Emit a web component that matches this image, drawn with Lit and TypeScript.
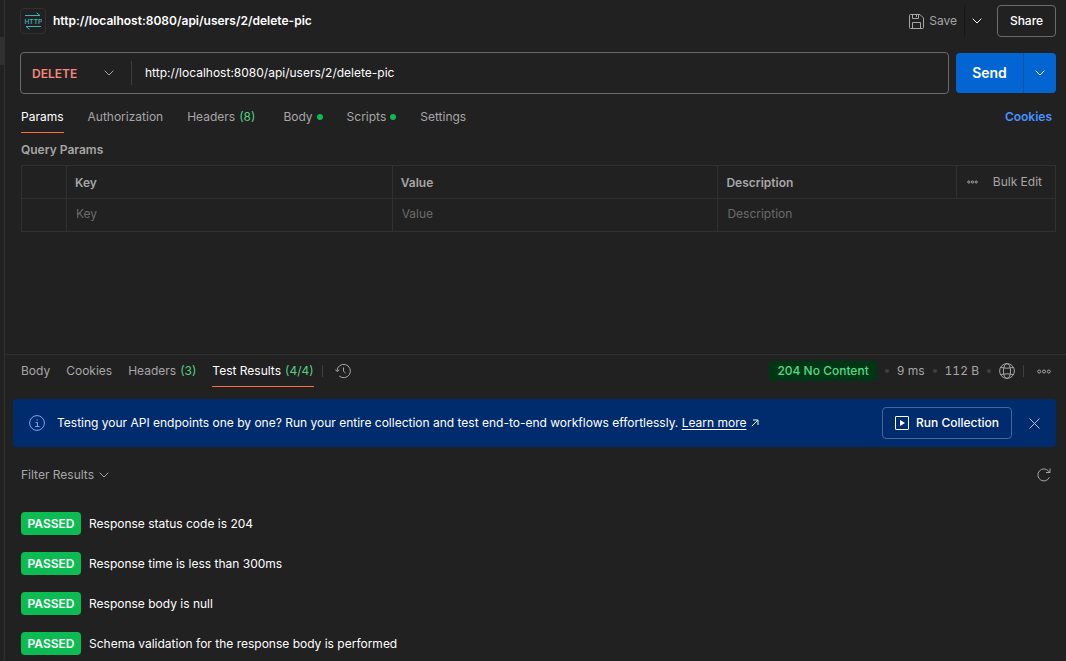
import { LitElement, html, css, svg, nothing } from "lit";
import { customElement, property, state } from "lit/decorators.js";
import { classMap } from "lit/directives/class-map.js";

const shared = css`
  * {
    box-sizing: border-box;
  }
  button,
  input,
  select {
    font: inherit;
    color: inherit;
    background: none;
    border: 0;
    margin: 0;
    padding: 0;
    outline: none;
  }
  button,
  select {
    cursor: pointer;
  }
  button {
    display: inline-flex;
    align-items: center;
    justify-content: center;
    white-space: nowrap;
  }
  svg {
    display: block;
    flex: none;
    fill: none;
    stroke: currentColor;
  }
`;

const chevron = html`<svg width="10" height="6" viewBox="0 0 10 6" aria-hidden="true">
  ${svg`<path d="M0.7 0.7 5 5 9.3 0.7" />`}
</svg>`;

interface Tab {
  label: string;
  count?: string;
  dot?: boolean;
}

@customElement("tab-bar")
export class TabBar extends LitElement {
  @property({ attribute: false }) tabs: Tab[] = [];
  @property({ type: Number }) active = 0;

  static styles = [
    shared,
    css`
      :host {
        display: block;
      }
      .tabs {
        display: flex;
        gap: var(--tab-gap, 24px);
      }
      .tab {
        height: 32px;
        gap: 4px;
        color: #a6a6a6;
        border-bottom: 1px solid transparent;
      }
      .active {
        color: #fff;
        border-bottom-color: #ff6c37;
      }
      .count {
        margin-right: var(--count-space, 0);
        color: #55cf80;
      }
      .dot {
        width: 6px;
        height: 6px;
        border-radius: 50%;
        background: #0cbb52;
      }
    `,
  ];

  render() {
    return html`<div class="tabs" role="tablist">
      ${this.tabs.map(
        (t, i) => html`<button
          role="tab"
          class=${classMap({ tab: true, active: i === this.active })}
          aria-selected=${i === this.active}
          @click=${() => (this.active = i)}
        >
          <span>${t.label}</span>
          ${t.count ? html`<span class="count">(${t.count})</span>` : nothing}
          ${t.dot ? html`<span class="dot"></span>` : nothing}
        </button>`
      )}
    </div>`;
  }
}

@customElement("request-pane")
export class RequestPane extends LitElement {
  @state() private url = "http://localhost:8080/api/users/2/delete-pic";

  static styles = [
    shared,
    css`
      :host {
        display: block;
        padding: 5px 10px 16px 15px;
      }
      .head {
        display: flex;
        align-items: center;
        height: 32px;
      }
      .http {
        display: grid;
        place-items: center;
        width: 26px;
        height: 26px;
        border: 1px solid #303030;
        border-radius: 4px;
        color: #3fb0ba;
      }
      .http text {
        fill: currentColor;
        stroke: none;
        font: 500 7px Roboto, sans-serif;
      }
      .title {
        flex: 1;
        margin: 0 0 0 7px;
        font-size: 12px;
        font-weight: 600;
        color: #fff;
      }
      .save {
        gap: 5px;
        padding-right: 7px;
        height: 32px;
        color: #a6a6a6;
        border-right: 1px solid #171717;
      }
      .more {
        width: 24px;
        height: 32px;
        color: #fff;
      }
      .share {
        width: 59px;
        height: 32px;
        margin-left: 8px;
        border: 1px solid #6b6b6b;
        border-radius: 4px;
        color: #fff;
        font-weight: 500;
      }
      .line {
        display: flex;
        align-items: center;
        gap: 7px;
        margin-top: 15px;
      }
      .box {
        flex: 1;
        display: flex;
        align-items: center;
        height: 42px;
        border: 1px solid #6b6b6b;
        border-radius: 4px;
      }
      .method {
        display: grid;
        align-items: center;
        width: 111px;
        height: 24px;
        border-right: 1px solid #3d3d3d;
        color: #a6a6a6;
      }
      .method select,
      .method svg {
        grid-area: 1 / 1;
      }
      .method svg {
        justify-self: end;
        margin-right: 17px;
        pointer-events: none;
      }
      .method select {
        appearance: none;
        height: 24px;
        padding: 1px 0 0 11px;
        color: #f7877a;
        font-weight: 600;
      }
      .url {
        flex: 1;
        min-width: 0;
        padding: 0 13px 1px;
        height: 32px;
        color: #fff;
      }
      .send {
        display: flex;
        height: 40px;
        border-radius: 4px;
        overflow: hidden;
        background: #0265d2;
        color: #fff;
      }
      .go {
        width: 67px;
        font-size: 14px;
        font-weight: 600;
      }
      .drop {
        width: 33px;
        border-left: 1px solid #0553ab;
      }
      .tabrow {
        display: flex;
        align-items: center;
        justify-content: space-between;
        margin-top: 7px;
        padding: 0 4px 0 1px;
      }
      tab-bar {
        --count-space: 4px;
      }
      .cookies {
        color: #4792ff;
        font-weight: 600;
        text-decoration: none;
      }
      .sub {
        margin: 9px 0 7px 1px;
        font-size: 12px;
        line-height: 16px;
        font-weight: 600;
        color: #a6a6a6;
      }
      .wrap {
        padding-left: 1px;
      }
      table {
        width: 100%;
        table-layout: fixed;
        border-collapse: collapse;
      }
      .c0 {
        width: 45px;
      }
      .c1 {
        width: 31.5%;
      }
      .c3 {
        width: 99px;
      }
      th,
      td {
        height: 33px;
        padding: 0 8px 3px;
        border: 1px solid #303030;
        text-align: left;
        color: #a6a6a6;
      }
      th {
        padding: 2px 8px 0;
        font-weight: 600;
      }
      th:last-child {
        padding: 0 13px 0 10px;
      }
      .tools {
        display: flex;
        align-items: center;
        justify-content: space-between;
        font-weight: 400;
      }
      td input {
        width: 100%;
        height: 24px;
        padding-left: 1px;
      }
      td input::placeholder {
        color: #6b6b6b;
        opacity: 1;
      }
    `,
  ];

  render() {
    return html`
      <div class="head">
        <span class="http">
          <svg width="18" height="18" viewBox="0 0 18 18" aria-hidden="true">
            <path d="M1 3.5H16M12.6 0.8 16 3.5M2 14.5H17M5.4 17.2 2 14.5" />
            <text x="0.5" y="11.6">HTTP</text>
          </svg>
        </span>
        <h1 class="title">${this.url}</h1>
        <button class="save">
          <svg width="15" height="15" viewBox="0 0 15 15" aria-hidden="true">
            <path d="M1.5 0.5H11L14.5 4V13.5a1 1 0 0 1-1 1H1.5a1 1 0 0 1-1-1V1.5a1 1 0 0 1 1-1ZM3.5 0.5V4.5H9.5V0.5M7.5 1V3M3.5 14.5V8.5H11.5V14.5" />
          </svg>
          Save
        </button>
        <button class="more" aria-label="Save options">${chevron}</button>
        <button class="share">Share</button>
      </div>

      <div class="line">
        <div class="box">
          <div class="method">
            <select aria-label="Method">
              <option>DELETE</option>
            </select>
            ${chevron}
          </div>
          <input
            class="url"
            aria-label="Request URL"
            .value=${this.url}
            @input=${(e: Event) => (this.url = (e.target as HTMLInputElement).value)}
          />
        </div>
        <div class="send">
          <button class="go">Send</button>
          <button class="drop" aria-label="Send options">${chevron}</button>
        </div>
      </div>

      <div class="tabrow">
        <tab-bar
          .tabs=${[
            { label: "Params" },
            { label: "Authorization" },
            { label: "Headers", count: "8" },
            { label: "Body", dot: true },
            { label: "Scripts", dot: true },
            { label: "Settings" },
          ]}
        ></tab-bar>
        <a class="cookies" href="#cookies">Cookies</a>
      </div>

      <h2 class="sub">Query Params</h2>
      <div class="wrap">
        <table>
          <colgroup>
            <col class="c0" />
            <col class="c1" />
            <col class="c1" />
            <col />
            <col class="c3" />
          </colgroup>
          <thead>
            <tr>
              <th></th>
              <th>Key</th>
              <th>Value</th>
              <th>Description</th>
              <th>
                <div class="tools">
                  <button aria-label="Column options">
                    <svg width="11" height="4" viewBox="0 0 11 4" aria-hidden="true">
                      <circle cx="1.8" cy="2" r="1.1" />
                      <circle cx="5.5" cy="2" r="1.1" />
                      <circle cx="9.2" cy="2" r="1.1" />
                    </svg>
                  </button>
                  <button>Bulk Edit</button>
                </div>
              </th>
            </tr>
          </thead>
          <tbody>
            <tr>
              <td></td>
              <td><input aria-label="Key" placeholder="Key" /></td>
              <td><input aria-label="Value" placeholder="Value" /></td>
              <td colspan="2"><input aria-label="Description" placeholder="Description" /></td>
            </tr>
          </tbody>
        </table>
      </div>
    `;
  }
}

@customElement("response-pane")
export class ResponsePane extends LitElement {
  @state() private bannerOpen = true;

  private results = [
    "Response status code is 204",
    "Response time is less than 300ms",
    "Response body is null",
    "Schema validation for the response body is performed",
  ];

  static styles = [
    shared,
    css`
      :host {
        display: block;
        border-top: 1px solid #303030;
        padding: 0 10px 6px 8px;
      }
      .bar {
        display: flex;
        align-items: center;
        height: 32px;
        padding-left: 8px;
      }
      tab-bar {
        --tab-gap: 16px;
      }
      .rule {
        width: 1px;
        height: 12px;
        margin: 0 8px;
        background: #3d3d3d;
      }
      .history {
        margin-left: 4px;
        color: #a6a6a6;
      }
      .meta {
        display: flex;
        align-items: center;
        margin-left: auto;
        color: #a6a6a6;
        font-variant-numeric: tabular-nums;
      }
      .status {
        height: 20px;
        line-height: 20px;
        padding: 0 8px;
        border-radius: 4px;
        background: #013614;
        color: #55d98a;
        font-weight: 500;
        font-variant-numeric: normal;
      }
      .sep {
        width: 4px;
        height: 4px;
        margin: 0 8px;
        border-radius: 50%;
        background: #404040;
      }
      .dots {
        padding: 0 5px;
      }
      .banner {
        display: flex;
        align-items: center;
        height: 48px;
        margin-top: 12px;
        padding: 0 12px 0 16px;
        border-radius: 4px;
        background: #002c6e;
        color: #fff;
      }
      .info {
        color: #71a9f7;
        margin-right: 12px;
      }
      .msg {
        flex: 1;
        margin: 0;
      }
      .msg a {
        color: inherit;
        text-underline-offset: 2px;
      }
      .msg svg {
        display: inline-block;
        margin-left: 1px;
      }
      .run {
        gap: 7px;
        width: 130px;
        height: 32px;
        border: 1px solid #47679a;
        border-radius: 4px;
        font-weight: 500;
      }
      .play {
        fill: currentColor;
        stroke: none;
      }
      .close {
        width: 20px;
        height: 20px;
        margin-left: 12px;
        color: #b3c0d4;
      }
      .filter {
        display: flex;
        align-items: center;
        justify-content: space-between;
        height: 24px;
        margin-top: 16px;
        padding: 0 5px 0 8px;
        color: #a6a6a6;
      }
      .filter button {
        gap: 5px;
      }
      .list {
        display: grid;
        gap: 17px;
        margin: 25px 0 0;
        padding: 0 0 0 8px;
        list-style: none;
      }
      .item {
        display: flex;
        align-items: center;
        gap: 8px;
        height: 23px;
        color: #fff;
      }
      .badge {
        width: 60px;
        line-height: 23px;
        text-align: center;
        border-radius: 4px;
        background: #0cbb52;
        font-weight: 600;
      }
    `,
  ];

  private banner() {
    return html`<div class="banner">
      <svg class="info" width="16" height="16" viewBox="0 0 16 16" aria-hidden="true">
        <circle cx="8" cy="8" r="7.4" />
        <path d="M6.5 7.5H8.5V11.5M6 11.5H10.5M7.5 4.9H8.8" />
      </svg>
      <p class="msg">
        Testing your API endpoints one by one? Run your entire collection and test end-to-end workflows effortlessly.
        <a href="#learn">Learn more</a>
        <svg width="8" height="8" viewBox="0 0 8 8" aria-hidden="true">
          <path d="M0.8 7.2 7 1M2 1H7V6" />
        </svg>
      </p>
      <button class="run">
        <svg width="14" height="14" viewBox="0 0 14 14" aria-hidden="true">
          <rect x="0.5" y="0.5" width="13" height="13" rx="0.5" />
          <path class="play" d="M5 4 10 7 5 10Z" />
        </svg>
        Run Collection
      </button>
      <button class="close" aria-label="Dismiss" @click=${() => (this.bannerOpen = false)}>
        <svg width="11" height="11" viewBox="0 0 11 11" aria-hidden="true">
          <path d="M0.5 0.5 10.5 10.5M10.5 0.5 0.5 10.5" />
        </svg>
      </button>
    </div>`;
  }

  render() {
    return html`
      <div class="bar">
        <tab-bar
          .active=${3}
          .tabs=${[
            { label: "Body" },
            { label: "Cookies" },
            { label: "Headers", count: "3" },
            { label: "Test Results", count: "4/4" },
          ]}
        ></tab-bar>
        <span class="rule"></span>
        <button class="history" aria-label="History">
          <svg width="16" height="16" viewBox="0 0 16 16" aria-hidden="true">
            <path d="M2 8a6.7 6.7 0 1 1 2.2 5M0.3 6.6 2.1 8.6 4.2 6.8M8.5 4.5V8.3L10.5 10" />
          </svg>
        </button>
        <div class="meta">
          <span class="status">204 No Content</span>
          <span class="sep"></span>
          <span>9 ms</span>
          <span class="sep"></span>
          <span>112 B</span>
          <span class="sep"></span>
          <button aria-label="Network">
            <svg width="16" height="16" viewBox="0 0 16 16" aria-hidden="true">
              <circle cx="8" cy="8" r="7.4" />
              <ellipse cx="8" cy="8" rx="3.6" ry="7.4" />
              <path d="M1.7 4.5Q8 6 14.3 4.5M1.7 11.5Q8 10 14.3 11.5" />
            </svg>
          </button>
          <span class="rule"></span>
          <button class="dots" aria-label="More">
            <svg width="14" height="5" viewBox="0 0 14 5" aria-hidden="true">
              <circle cx="2.2" cy="2.5" r="1.5" />
              <circle cx="7" cy="2.5" r="1.5" />
              <circle cx="11.8" cy="2.5" r="1.5" />
            </svg>
          </button>
        </div>
      </div>

      ${this.bannerOpen ? this.banner() : nothing}

      <div class="filter">
        <button>Filter Results ${chevron}</button>
        <button aria-label="Refresh">
          <svg width="14" height="14" viewBox="0 0 14 14" aria-hidden="true">
            <path d="M12.4 9.3A6 6 0 1 1 11.6 3.2L12.8 4.5M13 0.5V4.5H9" />
          </svg>
        </button>
      </div>

      <ul class="list">
        ${this.results.map(
          (r) => html`<li class="item"><span class="badge">PASSED</span><span>${r}</span></li>`
        )}
      </ul>
    `;
  }
}

@customElement("app-root")
export class AppRoot extends LitElement {
  static styles = [
    shared,
    css`
      :host {
        display: flex;
        min-height: 100vh;
        background: #212121;
        color: #a6a6a6;
        font: 12px/16px Inter, sans-serif;
      }
      .rail {
        flex: none;
        width: 5px;
        padding-top: 37px;
        border-right: 1px solid #303030;
      }
      .thumb {
        height: 28px;
        background: #303030;
      }
      .main {
        flex: 1;
        min-width: 0;
        display: flex;
        flex-direction: column;
      }
      request-pane {
        flex: 1;
      }
    `,
  ];

  render() {
    return html`
      <div class="rail"><div class="thumb"></div></div>
      <main class="main">
        <request-pane></request-pane>
        <response-pane></response-pane>
      </main>
    `;
  }
}
